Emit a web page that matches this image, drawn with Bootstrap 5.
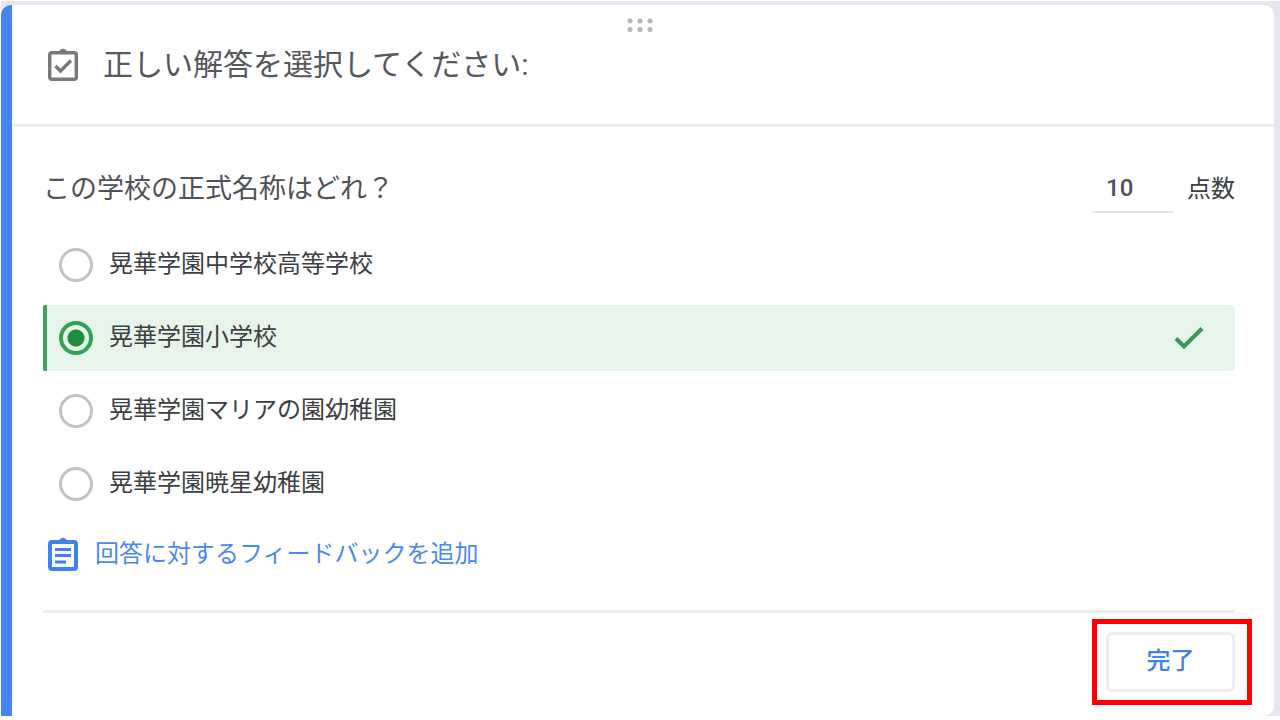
<!DOCTYPE html>
<html lang="ja">
<head>
<meta charset="utf-8">
<meta name="viewport" content="width=device-width, initial-scale=1">
<title>解答集</title>
<link href="https://cdn.jsdelivr.net/npm/bootstrap@5.3.0/dist/css/bootstrap.min.css" rel="stylesheet">
<style>
body { font-family: Roboto, "Noto Sans CJK JP", sans-serif; font-size: 24px; line-height: 36px; color: #3c4043; background: #fff; }
.form-canvas { background: #e8e5f1; margin: 1px 0 0 1px; padding: 4px 6px 0 0; }
.question-card { border: 0; border-left: 11px solid #4684f1; border-radius: 10px 10px 10px 0; color: inherit; }
.question-head { padding: 41px 32px 41px 35px; gap: 24px; border-bottom: 3px solid #eeedf3; }
.question-head h1 { font-size: 30px; line-height: 37px; font-weight: 400; color: #55585c; }
.grip { position: absolute; top: 12px; left: 0; right: 6px; }
.question-body { padding: 38px 39px 24px 31px; }
.prompt { font-size: 27px; line-height: 48px; font-weight: 400; color: #505357; }
.points-box { width: 81px; height: 48px; border: 0; border-bottom: 2px solid #e6e6ea; padding: 0 14px; color: #505260; font-size: 24px; font-weight: 500; background: transparent; }
.points-label { line-height: 48px; margin-left: 14px; }
.choices { gap: 7px; margin: 19px 0; }
.choice { height: 66px; padding: 0 31px 0 12px; border-left: 4px solid transparent; border-radius: 2px 5px 5px 2px; }
.choice.correct { background: #e6f4ea; border-left-color: #43a25f; }
.choice .form-check-input { width: 34px; height: 34px; margin: 0; border: 3px solid #c3c3c3; flex: none; background-color: transparent; }
.choice .form-check-input:checked { border: 4px solid #34a353; background-image: radial-gradient(circle, #1e8e3e 8px, transparent 9px); }
.choice label { line-height: 36px; padding-bottom: 2px; }
.feedback { color: #4d88ee; gap: 16px; padding-left: 4px; }
.foot { margin-top: 38px; border-top: 3px solid #eeedf0; padding-top: 19px; }
.btn-done { width: 129px; height: 60px; border: 3px solid #ecedef; border-radius: 6px; color: #4580e8; font-size: 24px; font-weight: 500; line-height: 36px; padding: 0 0 3px; }
/* red frame drawing attention to the button */
.callout-frame::after { content: ""; position: absolute; inset: -13px -17px -13px -14px; border: 5px solid #f00; pointer-events: none; }
</style>
</head>
<body>
<main class="form-canvas">
  <form class="card question-card">
    <svg class="grip mx-auto" width="28" height="16" viewBox="0 0 28 16" fill="#b5b5b5" aria-hidden="true"><circle cx="4" cy="4" r="2.5"/><circle cx="14" cy="4" r="2.5"/><circle cx="24" cy="4" r="2.5"/><circle cx="4" cy="12.5" r="2.5"/><circle cx="14" cy="12.5" r="2.5"/><circle cx="24" cy="12.5" r="2.5"/></svg>
    <header class="question-head d-flex align-items-center">
      <svg class="flex-shrink-0" width="32" height="34" viewBox="0 0 32 34" fill="none" stroke="#77797b" stroke-width="3.4" aria-hidden="true"><rect x="2.700" y="4.700" width="26.600" height="26.600" rx="2"/><path d="M9 4.500Q12 4.500 13 2.500Q16-.5 19 2.500Q20 4.500 23 4.500Z" fill="#77797b" stroke-width="1"/><path d="M8.500 18L13.500 23L24 12.500"/></svg>
      <h1 class="m-0">正しい解答を選択してください:</h1>
    </header>
    <div class="question-body">
      <div class="d-flex align-items-start">
        <h2 class="prompt m-0 me-auto">この学校の正式名称はどれ？</h2>
        <input class="points-box" id="points" type="text" inputmode="numeric" value="10">
        <label class="points-label" for="points">点数</label>
      </div>
      <div class="choices d-flex flex-column" role="radiogroup" aria-label="選択肢">
        <div class="choice d-flex align-items-center gap-3">
          <input class="form-check-input" type="radio" name="answer" id="a1"><label for="a1">晃華学園中学校高等学校</label>
        </div>
        <div class="choice correct d-flex align-items-center gap-3">
          <input class="form-check-input" type="radio" name="answer" id="a2" checked><label for="a2">晃華学園小学校</label>
          <svg class="ms-auto" width="30" height="24" viewBox="0 0 30 24" fill="none" stroke="#34995a" stroke-width="4" aria-hidden="true"><path d="M2 12.5L10 20.5L28 2.5"/></svg>
        </div>
        <div class="choice d-flex align-items-center gap-3">
          <input class="form-check-input" type="radio" name="answer" id="a3"><label for="a3">晃華学園マリアの園幼稚園</label>
        </div>
        <div class="choice d-flex align-items-center gap-3">
          <input class="form-check-input" type="radio" name="answer" id="a4"><label for="a4">晃華学園暁星幼稚園</label>
        </div>
      </div>
      <a class="feedback d-flex align-items-center text-decoration-none" href="#feedback">
        <svg width="32" height="34" viewBox="0 0 32 34" fill="none" stroke="#3e82f0" stroke-width="4" aria-hidden="true"><rect x="3" y="5" width="26" height="27" rx="2"/><path d="M9 5Q12 5 13 2.5Q16-.5 19 2.5Q20 5 23 5Z" fill="#3e82f0" stroke-width="1"/><path d="M8 12.5H24M8 18.5H24M8 25H19" stroke-width="3"/></svg>
        <span>回答に対するフィードバックを追加</span>
      </a>
      <div class="foot d-flex justify-content-end">
        <div class="callout-frame position-relative"><button class="btn btn-done d-block" type="button">完了</button></div>
      </div>
    </div>
  </form>
</main>
<script src="https://cdn.jsdelivr.net/npm/bootstrap@5.3.0/dist/js/bootstrap.bundle.min.js"></script>
</body>
</html>
